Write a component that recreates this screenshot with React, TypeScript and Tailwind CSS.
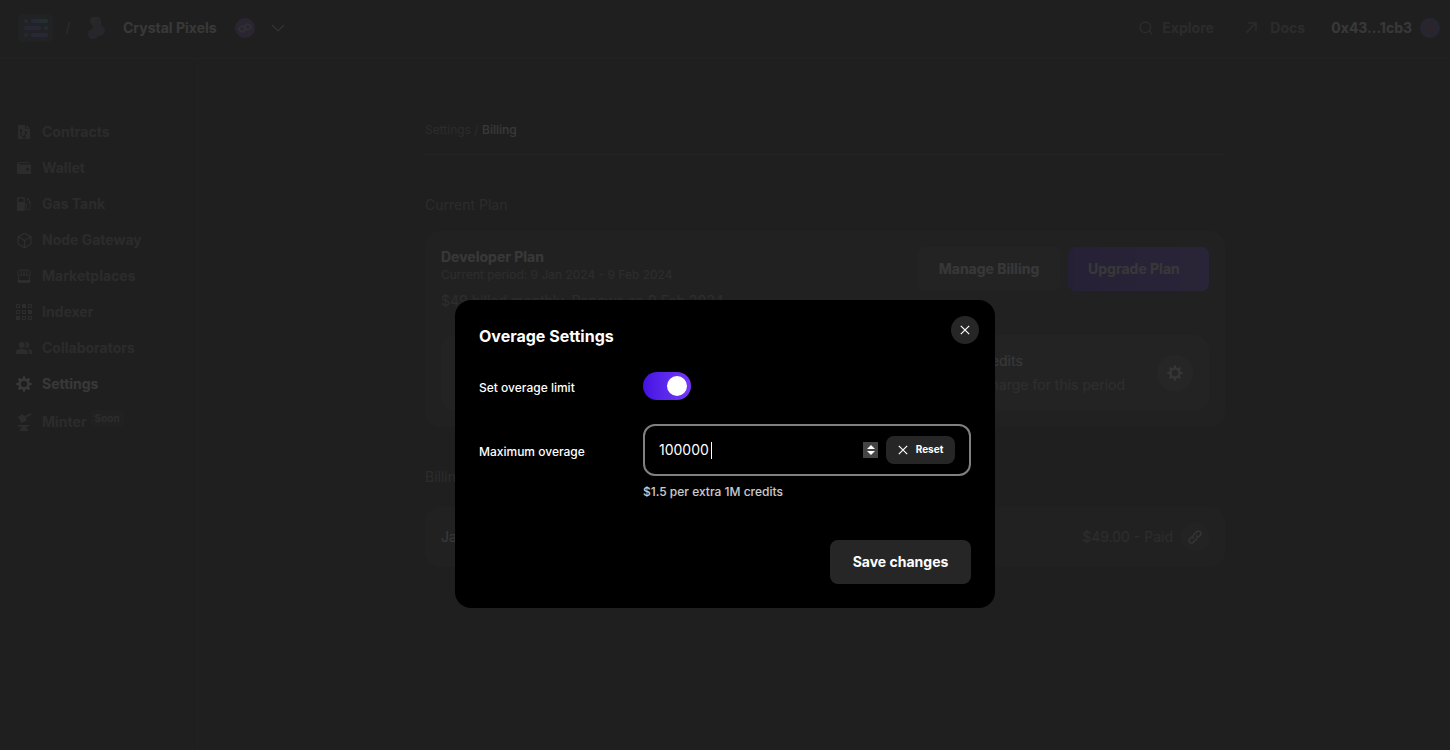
import { useRef, type ReactNode } from "react";
import { Search, Box } from "lucide-react";
import { MdPeopleAlt } from "react-icons/md";

function SequenceLogo() {
  return (
    <svg width="35" height="28" viewBox="0 0 35 28" aria-hidden="true">
      <defs>
        <linearGradient id="seqA" x1="0" x2="1">
          <stop offset="0" stopColor="#4462fe" />
          <stop offset="1" stopColor="#3a9fa5" />
        </linearGradient>
        <linearGradient id="seqB" x1="0" x2="1">
          <stop offset="0" stopColor="#5a3bdf" />
          <stop offset="1" stopColor="#6a5cdf" />
        </linearGradient>
      </defs>
      <rect width="35" height="28" rx="6" fill="#1b2430" />
      <rect x="6" y="5" width="4" height="4" rx="2" fill="#5b5bdf" />
      <rect x="13" y="5" width="17" height="4" rx="2" fill="url(#seqA)" />
      <rect x="6" y="12" width="17" height="4" rx="2" fill="url(#seqB)" />
      <rect x="26" y="12" width="4" height="4" rx="2" fill="#3f8fa5" />
      <rect x="6" y="19" width="4" height="4" rx="2" fill="#6a3bdf" />
      <rect x="13" y="19" width="17" height="4" rx="2" fill="#5f55de" />
    </svg>
  );
}

function ProjectAvatar() {
  return (
    <svg width="20" height="24" viewBox="0 0 20 24" aria-hidden="true">
      <path
        d="M4 2Q8 0 12 1Q15 4 14 9Q18 11 18 15Q17 20 11 20Q10 23 5 23Q1 22 1 18Q1 14 5 13Q7 12 5 9Q2 6 4 2Z"
        fill="#55537c"
      />
      <path d="M4 2Q7 0 10 2Q9 6 6 8Q2 6 4 2Z" fill="#6d6550" />
    </svg>
  );
}

function PolygonBadge() {
  return (
    <svg width="20" height="20" viewBox="0 0 20 20" aria-hidden="true">
      <circle cx="10" cy="10" r="10" fill="#6f41a8" />
      <path
        d="M10 12.400 7.200 14 4.400 12.400V9.600L7.200 8 10 9.600M10 7.600 12.800 6l2.800 1.600v2.800L12.800 12 10 10.400M10 7.600v4.800"
        fill="none"
        stroke="#c4b8d8"
        strokeWidth="1.4"
        strokeLinejoin="round"
      />
    </svg>
  );
}

function ContractIcon() {
  return (
    <svg width="16" height="16" viewBox="0 0 16 16" fill="currentColor" aria-hidden="true">
      <path
        fillRule="evenodd"
        d="M2 1h7v4h5v10H2V1Zm3 4a1.300 1.300 0 0 0-.6 2.400V12h1.200V7.400A1.300 1.300 0 0 0 5 5Zm5 2a1.300 1.300 0 0 0-.6 2.400c0 1-1.900.7-1.900 2.600H6v1.500h1.300A1.300 1.300 0 1 0 8.700 12c0-.9 1.900-.8 1.900-2.600A1.300 1.300 0 0 0 10 7Z"
      />
      <path d="m10 1 4 3.500h-4V1Z" />
    </svg>
  );
}

function WalletIcon() {
  return (
    <svg width="16" height="16" viewBox="0 0 16 16" fill="currentColor" aria-hidden="true">
      <path
        fillRule="evenodd"
        d="M3 2h10v1H3.500C2.500 3 2.500 4.500 3.500 4.500H15V14H3a2 2 0 0 1-2-2V4a2 2 0 0 1 2-2Zm8.500 5.800a1.500 1.500 0 1 0 0 3 1.500 1.500 0 0 0 0-3Z"
      />
    </svg>
  );
}

function GasIcon() {
  return (
    <svg width="16" height="16" viewBox="0 0 16 16" fill="currentColor" aria-hidden="true">
      <path fillRule="evenodd" d="M2 1h6l1 1v13H1V2l1-1Zm.6 1.600V6h4.800V2.600H2.600Z" />
      <path
        d="M9 8h1.500v4.500q0 1.500 1.700 1.500t1.800-1.500V5.500L11.500 2M11.500 5V2.500M14 6.500h-2"
        fill="none"
        stroke="currentColor"
      />
    </svg>
  );
}

function StoreIcon() {
  return (
    <svg width="16" height="16" viewBox="0 0 16 16" fill="none" stroke="currentColor" aria-hidden="true">
      <path d="M3 2h10l1.500 4q0 1.500-1.700 1.500T11 6q0 1.500-1.500 1.500T8 6q0 1.500-1.500 1.500T5 6q0 1.500-1.700 1.500T1.500 6L3 2Zm2.500 0L5 6m3-4v4m2.500-4 .5 4" />
      <path d="M2.500 8v6.300h11V8" />
      <path d="M2 12h12v2.500H2z" fill="currentColor" stroke="none" />
    </svg>
  );
}

function IndexerIcon() {
  return (
    <svg width="16" height="16" viewBox="0 0 16 16" fill="none" stroke="currentColor" aria-hidden="true">
      <path d="M.5.5h3v3h-3zM12.500.5h3v3h-3zM.5 6.500h3v3h-3zM6.500 6.500h3v3h-3zM6.500 12.500h3v3h-3zM12.500 12.500h3v3h-3z" />
      <path d="M6 0h4v4H6zM12 6h4v4h-4zM0 12h4v4H0z" fill="currentColor" stroke="none" />
    </svg>
  );
}

function GearIcon() {
  return (
    <svg width="16" height="16" viewBox="0 0 16 16" fill="none" stroke="currentColor" aria-hidden="true">
      <circle cx="8" cy="8" r="4.500" strokeWidth="2.600" />
      <path
        d="M8 .3v3M8 12.700v3M.3 8h3M12.700 8h3M2.600 2.600l2 2M11.400 11.400l2 2M2.600 13.400l2-2M11.400 4.600l2-2"
        strokeWidth="2.200"
      />
    </svg>
  );
}

function MinterIcon() {
  return (
    <svg width="16" height="18" viewBox="0 0 16 18" fill="currentColor" aria-hidden="true">
      <path d="m2 4 4.500-3 1.700 2.200L14.500 0l1 1.500L9.600 5l1.400 2.500L5.500 10 2 4Z" />
      <path d="M1 12h12.500c0 1.200-1.500 1.800-3 1.800v1.500l1.500 1V18H4v-1.700l1.500-1v-1.500C3 13.800 1.500 13.300 1 12Z" />
    </svg>
  );
}

function ChevronIcon() {
  return (
    <svg width="14" height="8" viewBox="0 0 14 8" fill="none" stroke="currentColor" strokeWidth="1.200" aria-hidden="true">
      <path d="m1 1 6 6 6-6" />
    </svg>
  );
}

function OutwardIcon() {
  return (
    <svg width="16" height="16" viewBox="0 0 16 16" fill="none" stroke="currentColor" strokeWidth="1.500" aria-hidden="true">
      <path d="M2.500 12.500 12 3M4 3h8v8" />
    </svg>
  );
}

function CrossIcon() {
  return (
    <svg width="10" height="10" viewBox="0 0 10 10" stroke="currentColor" strokeWidth="1.200" aria-hidden="true">
      <path d="m.8.8 8.400 8.400M9.200.8.8 9.200" />
    </svg>
  );
}

function LinkIcon() {
  return (
    <svg width="14" height="14" viewBox="0 0 14 14" fill="none" stroke="currentColor" strokeWidth="1.200" strokeLinecap="round" aria-hidden="true">
      <path d="M5.400 8.200a2.300 2.300 0 0 1 .3-3.300L8.900 1.700a2.300 2.300 0 0 1 3.400 3.400L10.600 6.800" />
      <path d="M8.600 5.800a2.300 2.300 0 0 1-.3 3.300l-3.200 3.200a2.300 2.300 0 0 1-3.400-3.400L3.400 7.200" />
    </svg>
  );
}

const navItems: { label: string; icon: ReactNode; active?: boolean; soon?: boolean }[] = [
  { label: "Contracts", icon: <ContractIcon /> },
  { label: "Wallet", icon: <WalletIcon /> },
  { label: "Gas Tank", icon: <GasIcon /> },
  { label: "Node Gateway", icon: <Box size={17} /> },
  { label: "Marketplaces", icon: <StoreIcon /> },
  { label: "Indexer", icon: <IndexerIcon /> },
  { label: "Collaborators", icon: <MdPeopleAlt size={18} /> },
  { label: "Settings", icon: <GearIcon />, active: true },
  { label: "Minter", icon: <MinterIcon />, soon: true },
];

function Header() {
  return (
    <header className="flex h-[59px] items-center justify-between border-b border-white/15 pr-2.5 pb-[3px] pl-[18px] text-sm font-bold">
      <div className="flex items-center">
        <a href="#home" aria-label="Home">
          <SequenceLogo />
        </a>
        <span className="w-[30px] text-center font-normal text-white/50">/</span>
        <button type="button" className="flex items-center">
          <span className="ml-1 w-9">
            <ProjectAvatar />
          </span>
          <span className="w-28 text-left">Crystal Pixels</span>
          <PolygonBadge />
          <span className="ml-4 text-white/80">
            <ChevronIcon />
          </span>
        </button>
      </div>
      <div className="flex items-center">
        <a href="#explore" className="flex w-[106px] items-center gap-2 text-white/50">
          <Search size={16} />
          Explore
        </a>
        <a href="#docs" className="flex w-[87px] items-center gap-2.5 text-white/50">
          <OutwardIcon />
          Docs
        </a>
        <button type="button" className="flex items-center gap-2">
          0x43...1cb3
          <span className="size-5 rounded-full bg-radial from-[#8a2470] to-[#4a45b0] to-60%" />
        </button>
      </div>
    </header>
  );
}

function Sidebar() {
  return (
    <nav className="mr-0.5 w-[198px] shrink-0 border-r border-white/10 px-4 pt-[55px]">
      <ul className="text-sm font-bold">
        {navItems.map((item) => (
          <li key={item.label}>
            <a
              href={"#" + item.label}
              className={
                item.active
                  ? "flex h-9 items-center gap-2.5 text-white"
                  : item.soon
                    ? "flex h-10 items-center gap-2.5 text-white/50"
                    : "flex h-9 items-center gap-2.5 text-white/50"
              }
            >
              <span className="flex w-4 justify-center [&>svg]:shrink-0">{item.icon}</span>
              <span>{item.label}</span>
              {item.soon && (
                <span className="-ml-1.5 mb-2 rounded bg-white/10 px-1 text-[10px] leading-4">Soon</span>
              )}
            </a>
          </li>
        ))}
      </ul>
    </nav>
  );
}

function Billing() {
  return (
    <main className="flex-1 px-4 text-sm">
      <div className="mx-auto max-w-[800px]">
        <div className="border-b border-white/20 pt-[62px] pb-[15px] text-xs leading-[18px]">
          <span className="text-white/50">Settings /</span> <span className="font-medium">Billing</span>
        </div>
        <h2 className="pt-10 leading-5 text-white/50">Current Plan</h2>
        <section className="mt-4 rounded-2xl bg-white/10 p-4">
          <div className="flex items-start justify-between">
            <div>
              <h3 className="leading-5 font-bold">Developer Plan</h3>
              <p className="text-xs leading-4 text-white/50">Current period: 9 Jan 2024 - 9 Feb 2024</p>
              <p className="mt-2 leading-5 text-white/50">$49 billed monthly. Renews on 9 Feb 2024</p>
            </div>
            <div className="flex gap-2 font-bold">
              <button type="button" className="h-11 w-[142px] rounded-lg bg-white/10">
                Manage Billing
              </button>
              <button
                type="button"
                className="h-11 w-[141px] rounded-lg bg-linear-to-r from-[#4411e1] to-[#7537f9] pl-5 text-left"
              >
                Upgrade Plan
              </button>
            </div>
          </div>
          <div className="mt-6 flex h-[76px] items-center justify-end gap-8 rounded-2xl bg-white/10 px-4">
            <div className="leading-6">
              <p>Extra credits</p>
              <p className="text-white/50">$0.00 charge for this period</p>
            </div>
            <button
              type="button"
              aria-label="Overage settings"
              className="grid size-9 place-items-center rounded-full bg-white/10 text-white/80"
            >
              <GearIcon />
            </button>
          </div>
        </section>
        <h2 className="pt-10 leading-5 text-white/50">Billing History</h2>
        <section className="mt-5 flex items-center justify-between rounded-2xl bg-white/10 p-4">
          <span>January 2024</span>
          <div className="flex items-center gap-2">
            <span className="text-white/50">$49.00 - Paid</span>
            <a href="#invoice" aria-label="Invoice" className="grid size-7 place-items-center rounded-full bg-white/10">
              <LinkIcon />
            </a>
          </div>
        </section>
      </div>
    </main>
  );
}

function OverageDialog() {
  const amount = useRef<HTMLInputElement>(null);
  return (
    <div className="fixed inset-0 flex items-start justify-center bg-[#222222]/90 pt-75">
      <form
        role="dialog"
        aria-labelledby="overage-title"
        className="relative w-[540px] rounded-2xl bg-black p-6 text-xs font-medium"
        onSubmit={(event) => event.preventDefault()}
      >
        <h1 id="overage-title" className="text-base leading-6 font-bold">
          Overage Settings
        </h1>
        <button
          type="button"
          aria-label="Close"
          className="absolute top-4 right-4 grid size-7 place-items-center rounded-full bg-[#262626]"
        >
          <CrossIcon />
        </button>
        <div className="mt-6 flex items-center">
          <label htmlFor="limit" className="w-41 pt-1">
            Set overage limit
          </label>
          <input
            id="limit"
            type="checkbox"
            role="switch"
            defaultChecked
            className="h-7 w-12 appearance-none rounded-full bg-[#262626] p-1 before:block before:size-5 before:rounded-full before:bg-white checked:bg-linear-to-r checked:from-[#4411e1] checked:to-[#7537f9] checked:before:ml-5"
          />
        </div>
        <div className="mt-6 flex items-center">
          <label htmlFor="maximum" className="w-41 pt-1">
            Maximum overage
          </label>
          <div className="flex h-13 flex-1 items-center gap-2 rounded-xl border-2 border-[#808080] px-3.5">
            <div className="relative min-w-0 flex-1">
              <input
                ref={amount}
                id="maximum"
                type="number"
                defaultValue="100000"
                className="w-full appearance-none bg-transparent text-sm font-normal caret-transparent outline-none [&::-webkit-inner-spin-button]:appearance-none"
              />
              <span className="pointer-events-none absolute top-0.5 left-13 h-[17px] w-px bg-white" />
            </div>
            <div className="flex h-4 w-[15px] flex-col justify-center gap-0.5 bg-[#444444]">
              <button
                type="button"
                aria-label="Increase"
                className="flex justify-center"
                onClick={() => amount.current?.stepUp()}
              >
                <svg width="8" height="4" viewBox="0 0 8 4" fill="currentColor">
                  <path d="M4 0 8 4H0Z" />
                </svg>
              </button>
              <button
                type="button"
                aria-label="Decrease"
                className="flex justify-center"
                onClick={() => amount.current?.stepDown()}
              >
                <svg width="8" height="4" viewBox="0 0 8 4" fill="currentColor">
                  <path d="M0 0h8L4 4Z" />
                </svg>
              </button>
            </div>
            <button
              type="button"
              className="flex h-7 w-[69px] items-center justify-center gap-2 rounded-lg bg-[#262626] text-[10px] font-bold"
            >
              <CrossIcon />
              Reset
            </button>
          </div>
        </div>
        <p className="mt-2 pl-41 leading-4 text-white/80">$1.5 per extra 1M credits</p>
        <div className="mt-10 flex justify-end">
          <button type="submit" className="h-11 w-[141px] rounded-lg bg-[#262626] text-sm font-bold">
            Save changes
          </button>
        </div>
      </form>
    </div>
  );
}

export default function App() {
  return (
    <div className="flex min-h-screen flex-col bg-black font-[Inter,sans-serif] text-white">
      <Header />
      <div className="flex flex-1">
        <Sidebar />
        <Billing />
      </div>
      <OverageDialog />
    </div>
  );
}
